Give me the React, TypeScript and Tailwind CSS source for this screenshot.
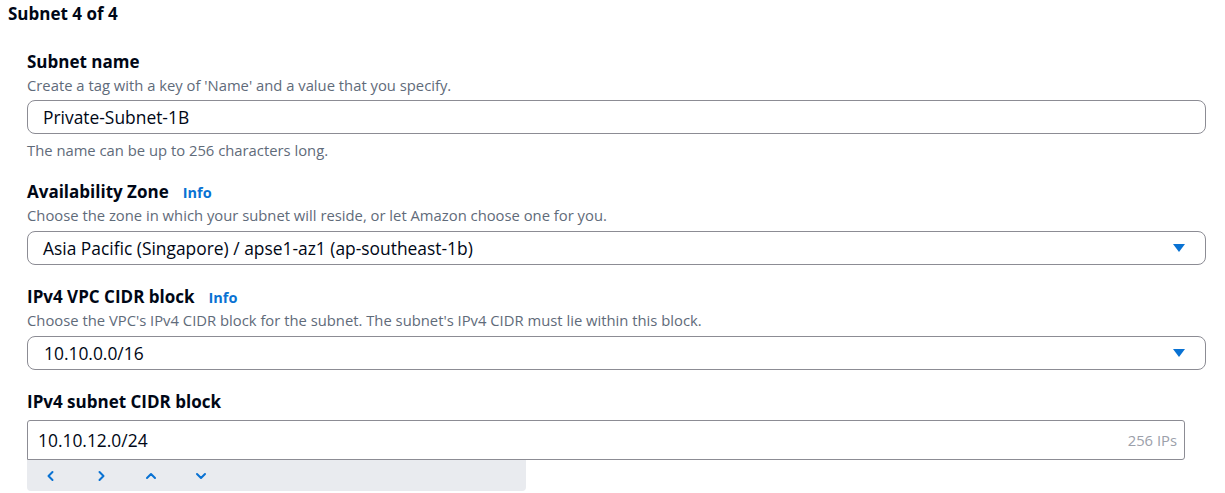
import React from "react";

const font = { fontFamily: '"Open Sans", "Noto Sans", sans-serif' };

function Caret() {
  return (
    <svg width="14" height="10" viewBox="0 0 14 10" className="shrink-0">
      <polygon points="1,1 13,1 7,9" fill="#0972d3" />
    </svg>
  );
}

function Chev({ d }: { d: string }) {
  return (
    <svg width="12" height="12" viewBox="0 0 12 12" fill="none" stroke="#0972d3" strokeWidth="2" strokeLinecap="round" strokeLinejoin="round">
      <path d={d} />
    </svg>
  );
}

function Label({ text, info }: { text: string; info?: boolean }) {
  return (
    <div className="flex items-baseline gap-[14px] h-[22px] leading-[22px]">
      <span className="text-[17px] font-bold text-[#000716]">{text}</span>
      {info && <span className="text-[14.5px] font-bold text-[#0972d3]">Info</span>}
    </div>
  );
}

function Desc({ text }: { text: string }) {
  return <div className="text-[14.8px] h-[20px] leading-[20px] text-[#5f6b7a] whitespace-nowrap">{text}</div>;
}

export default function App() {
  return (
    <div className="w-[1225px] h-[493px] bg-white overflow-hidden" style={font}>
      <div className="pl-[8px] pt-[3px] h-[25px] text-[17px] font-bold leading-[22px] text-[#000716]">Subnet 4 of 4</div>
      <div className="pl-[27px] pr-[19px] pt-[26px] flex flex-col">
        <Label text="Subnet name" />
        <div className="mt-[2px]">
          <Desc text="Create a tag with a key of 'Name' and a value that you specify." />
        </div>
        <div className="mt-[5px] h-[34px] rounded-[8px] border border-[#8c8c94] flex items-center pl-[15px] text-[17.4px] text-[#000716]">
          Private-Subnet-1B
        </div>
        <div className="mt-[6px]">
          <Desc text="The name can be up to 256 characters long." />
        </div>

        <div className="mt-[21px]">
          <Label text="Availability Zone" info />
        </div>
        <div className="mt-[2px]">
          <Desc text="Choose the zone in which your subnet will reside, or let Amazon choose one for you." />
        </div>
        <div className="mt-[6px] h-[34px] rounded-[8px] border border-[#8c8c94] flex items-center justify-between pl-[15px] pr-[19px] text-[17.4px] text-[#000716]">
          <span>Asia Pacific (Singapore) / apse1-az1 (ap-southeast-1b)</span>
          <Caret />
        </div>

        <div className="mt-[21px]">
          <Label text="IPv4 VPC CIDR block" info />
        </div>
        <div className="mt-[2px]">
          <Desc text="Choose the VPC's IPv4 CIDR block for the subnet. The subnet's IPv4 CIDR must lie within this block." />
        </div>
        <div className="mt-[6px] h-[34px] rounded-[8px] border border-[#8c8c94] flex items-center justify-between pl-[16px] pr-[19px] text-[17.4px] text-[#000716]">
          <span>10.10.0.0/16</span>
          <Caret />
        </div>

        <div className="mt-[21px]">
          <Label text="IPv4 subnet CIDR block" />
        </div>
        <div className="mr-[21px] mt-[7px] h-[40px] rounded-t-[3px] rounded-br-[3px] border border-[#8c8c94] flex items-center justify-between pl-[10px] pr-[7px] text-[17.4px] text-[#000716]">
          <span>10.10.12.0/24</span>
          <span className="text-[14.8px] text-[#9ba0aa]">256 IPs</span>
        </div>
        <div className="w-[499px] h-[31px] bg-[#e9ebef] rounded-b-[4px] flex items-center gap-[38px] pl-[18px]">
          <Chev d="M7.5 2 L3.5 6 L7.5 10" />
          <Chev d="M4.5 2 L8.5 6 L4.5 10" />
          <Chev d="M2 8 L6 4 L10 8" />
          <Chev d="M2 4 L6 8 L10 4" />
        </div>
      </div>
    </div>
  );
}
